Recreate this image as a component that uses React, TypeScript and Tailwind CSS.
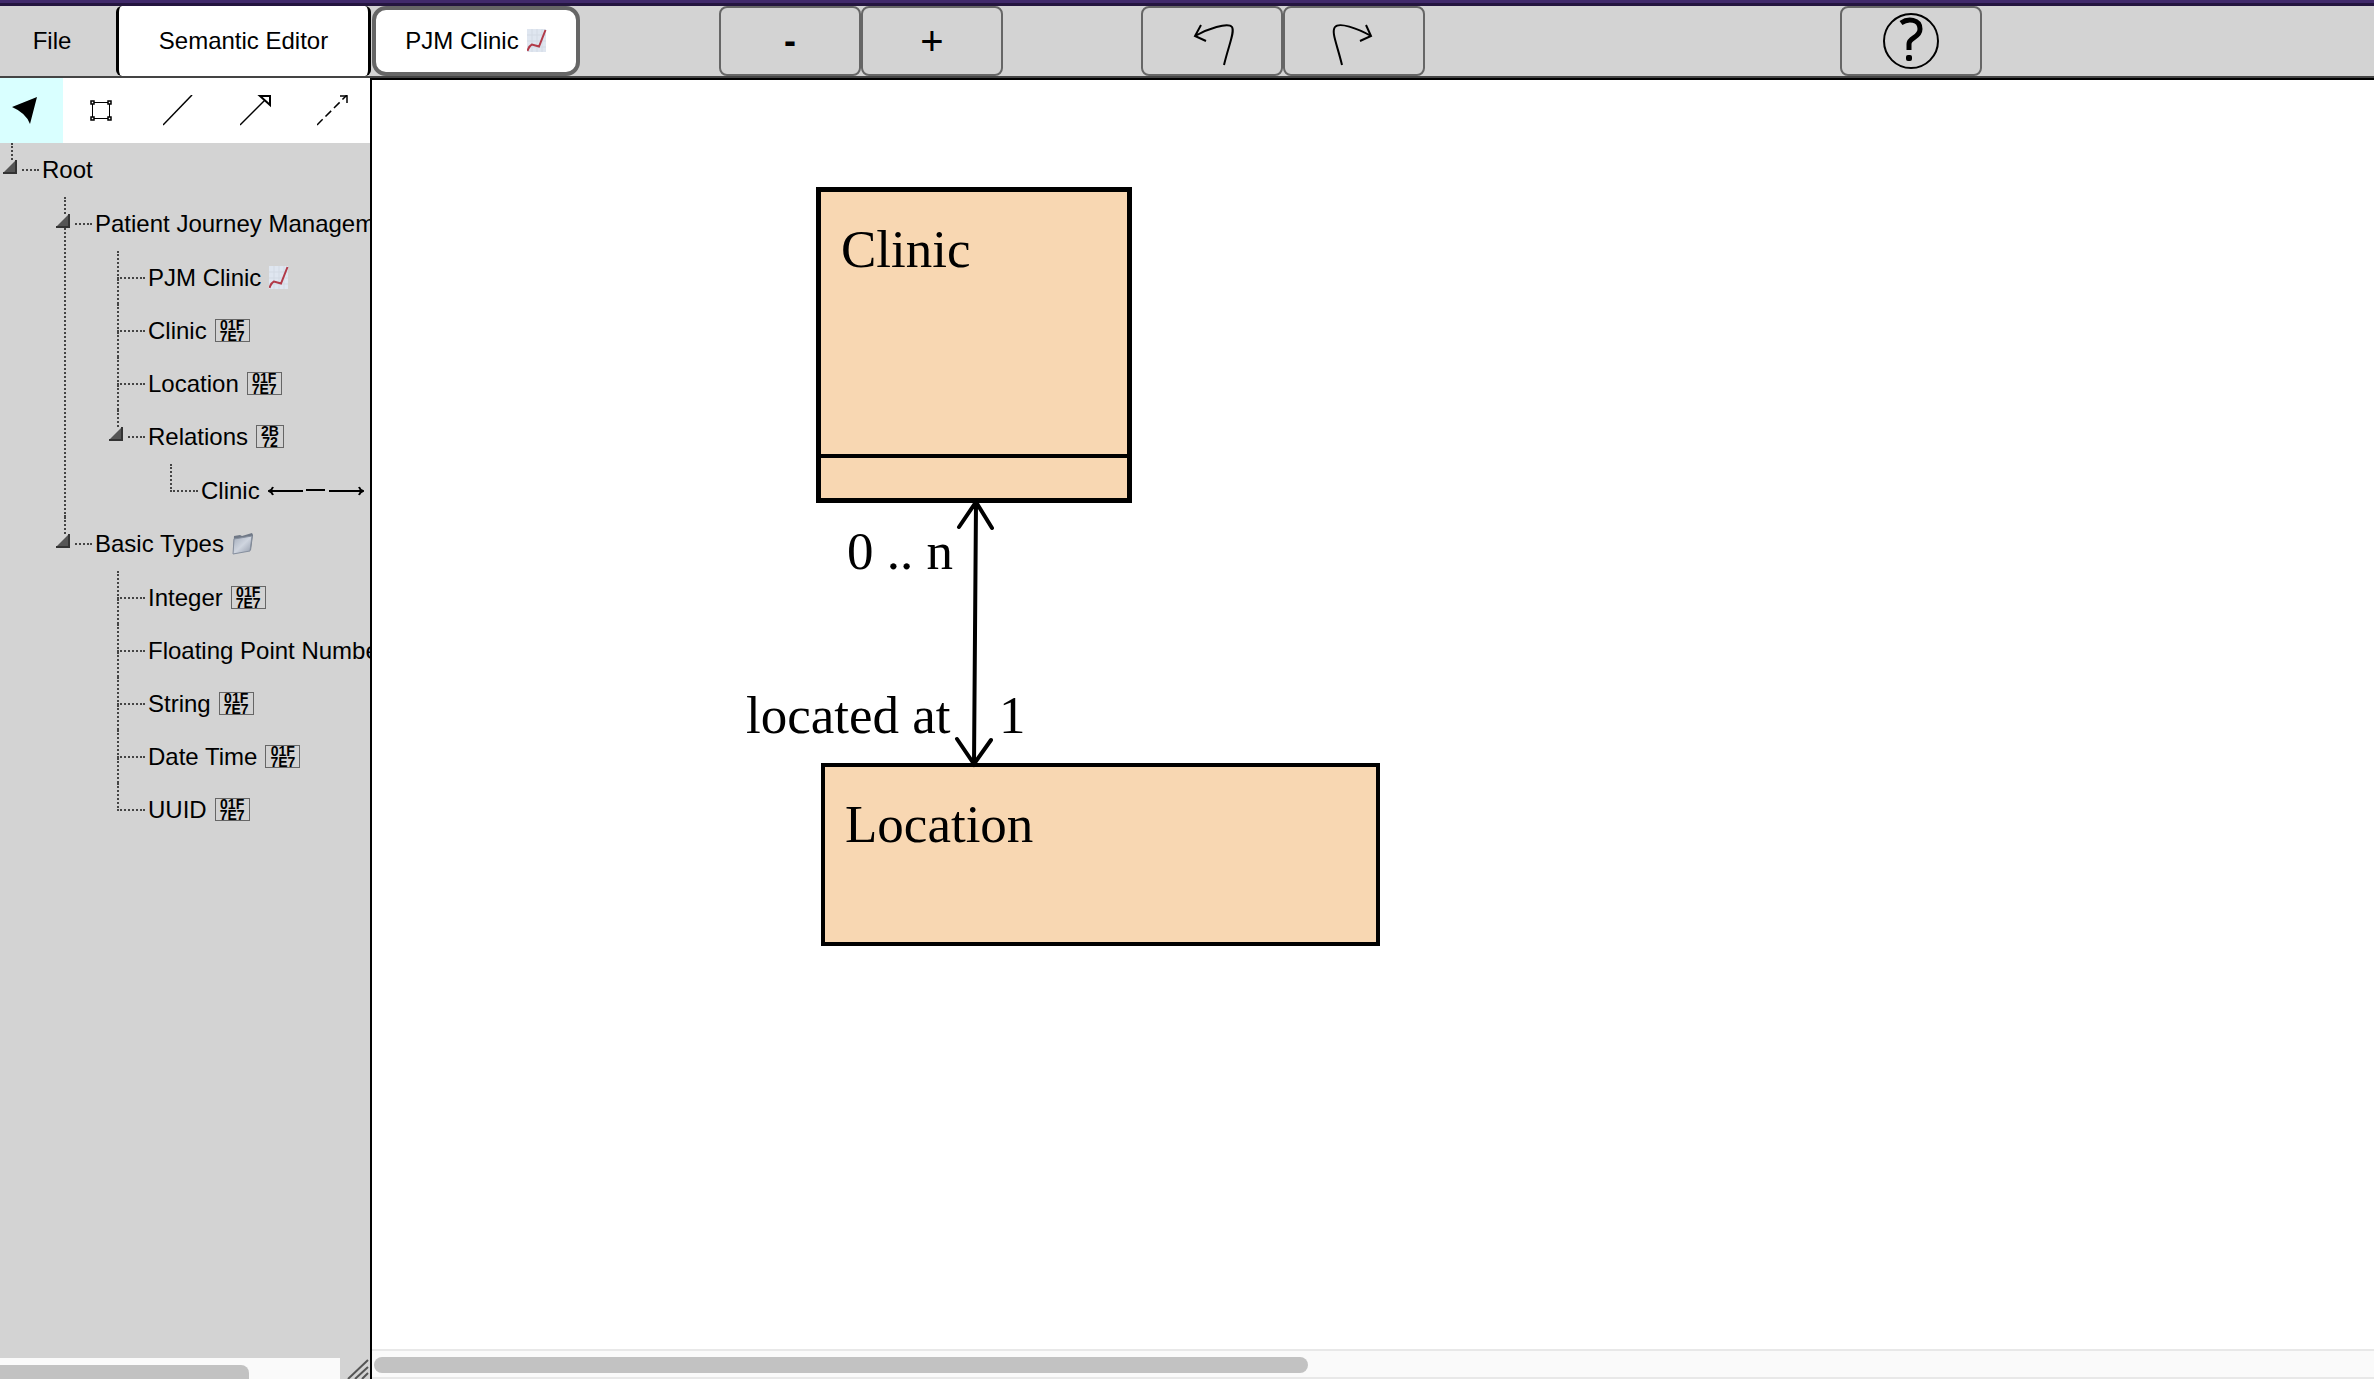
import { useState, type ReactNode } from "react";

function ChartIcon() {
  return (
    <svg width="20" height="24" viewBox="0 0 20 24" className="inline-block shrink-0" aria-hidden="true">
      <rect x="0" y="0" width="19" height="23" fill="#dfe6f0" />
      <path d="M5 0V23M10 0V23M15 0V23M0 6H19M0 12H19M0 18H19" stroke="#d3dae4" strokeWidth="1" />
      <path d="M0.500 22Q2 17 5 15.500L12 17.500L18.500 1" fill="none" stroke="#b23a48" strokeWidth="2" />
    </svg>
  );
}

function FolderIcon() {
  return (
    <svg width="22" height="24" viewBox="0 0 22 24" className="shrink-0" aria-hidden="true">
      <defs>
        <linearGradient id="folder" x1="0" y1="0" x2="1" y2="1">
          <stop offset="0" stopColor="#a3acbb" />
          <stop offset="0.5" stopColor="#cfd5df" />
          <stop offset="1" stopColor="#8f98a8" />
        </linearGradient>
      </defs>
      <path d="M2 4L8 3L10 4L20 1L21 3L19 18L1 22Z" fill="#6f7886" />
      <path d="M2 7L20 4L18 19L1 22Z" fill="url(#folder)" stroke="#868f9e" strokeWidth="1" />
    </svg>
  );
}

function HexBox({ top, bottom }: { top: string; bottom: string }) {
  return (
    <span className="flex h-[23px] shrink-0 flex-col items-center justify-center border border-[#666] px-1 text-[14px] leading-[11px] font-bold">
      <span>{top}</span>
      <span>{bottom}</span>
    </span>
  );
}

function RelationIcon() {
  return (
    <svg width="96" height="12" viewBox="0 0 96 12" className="shrink-0" fill="none" stroke="#000" strokeWidth="2" aria-hidden="true">
      <path d="M1 6H35M5 2Q4 5 1 6Q4 7 5 10" />
      <path d="M38 5H57" />
      <path d="M61 6H95M91 2Q92 5 95 6Q92 7 91 10" />
    </svg>
  );
}

type Node = { label: string; icon?: ReactNode; children?: Node[] };

const square = <HexBox top="01F" bottom="7E7" />;

const tree: Node = {
  label: "Root",
  children: [
    {
      label: "Patient Journey Management",
      children: [
        { label: "PJM Clinic", icon: <ChartIcon /> },
        { label: "Clinic", icon: square },
        { label: "Location", icon: square },
        {
          label: "Relations",
          icon: <HexBox top="2B" bottom="72" />,
          children: [{ label: "Clinic", icon: <RelationIcon /> }],
        },
      ],
    },
    {
      label: "Basic Types",
      icon: <FolderIcon />,
      children: [
        { label: "Integer", icon: square },
        { label: "Floating Point Number", icon: square },
        { label: "String", icon: square },
        { label: "Date Time", icon: square },
        { label: "UUID", icon: square },
      ],
    },
  ],
};

function TreeItem({ node, last }: { node: Node; last: boolean }) {
  const [open, setOpen] = useState(true);
  return (
    <li className="flex">
      <div className="relative flex w-[31px] shrink-0 flex-col">
        <div className="h-[28px] w-[28px] border-b-2 border-l-2 border-dotted border-[#444]" />
        {!last && <div className="flex-1 border-l-2 border-dotted border-[#444]" />}
        {node.children && (
          <button
            type="button"
            aria-label={`Toggle ${node.label}`}
            onClick={() => setOpen(!open)}
            className="absolute top-[17px] -left-2 bg-[#d3d3d3] pr-1"
          >
            <svg width="14" height="14" viewBox="0 0 14 14" className="block" aria-hidden="true">
              <path d="M13 0V13H0Z" fill="#555" />
              <path d="M13 0V13H0" fill="none" stroke="#333" strokeWidth="2" />
            </svg>
          </button>
        )}
      </div>
      <div>
        <div className="flex h-[53px] items-center gap-2 whitespace-nowrap">
          <span>{node.label}</span>
          {node.icon}
        </div>
        {node.children && open && (
          <ul className="pt-px pl-[22px]">
            {node.children.map((child, i) => (
              <TreeItem key={child.label} node={child} last={i === node.children!.length - 1} />
            ))}
          </ul>
        )}
      </div>
    </li>
  );
}

const tools = [
  {
    name: "Select",
    icon: <path d="M3 12L28 2L21 29Q17 18 3 12Z" fill="#000" stroke="none" />,
  },
  {
    name: "Class",
    icon: (
      <g strokeWidth="1">
        <path d="M8 7.500H22M8 23.500H22M6.500 9V22M23.500 9V22" />
        <path d="M5 6h3v3h-3zM22 6h3v3h-3zM5 22h3v3h-3zM22 22h3v3h-3z" strokeWidth="1.500" />
      </g>
    ),
  },
  { name: "Line", icon: <path d="M0 30L29 0" /> },
  {
    name: "Arrow",
    icon: (
      <g>
        <path d="M0 30L25 5" />
        <path d="M20 1H30V10Z" strokeWidth="2" />
      </g>
    ),
  },
  {
    name: "Dependency",
    icon: (
      <g>
        <path d="M0 30L30 0" strokeDasharray="8 4" />
        <path d="M23 1H30V8" />
      </g>
    ),
  },
];

function ToolbarButton({ label, children }: { label: string; children: ReactNode }) {
  return (
    <button
      type="button"
      aria-label={label}
      className="flex w-[142px] items-center justify-center rounded-[8px] border-2 border-[#666]"
    >
      {children}
    </button>
  );
}

function Toolbar() {
  return (
    <header className="flex h-[72px] shrink-0 border-b-2 border-[#444] bg-[#d3d3d3] text-[24px]">
      <button type="button" className="w-[116px] pr-3">
        File
      </button>
      <button type="button" className="w-[255px] rounded-[6px] border-x-[3px] border-black bg-white">
        Semantic Editor
      </button>
      <button
        type="button"
        className="ml-px flex w-[208px] items-center justify-center gap-2 rounded-[14px] border-4 border-[#666] bg-white"
      >
        PJM Clinic <ChartIcon />
      </button>
      <div className="ml-[139px] flex">
        <ToolbarButton label="Zoom out">
          <span className="text-[36px] font-bold">-</span>
        </ToolbarButton>
        <ToolbarButton label="Zoom in">
          <span className="text-[40px]">+</span>
        </ToolbarButton>
      </div>
      <div className="ml-[138px] flex">
        <ToolbarButton label="Undo">
          <svg width="46" height="50" viewBox="0 0 46 50" fill="none" stroke="#000" strokeWidth="2" aria-hidden="true">
            <path d="M35 49C40 28 46 16 43 11C39 6 18 13 6 20M12 9L6 20L17 25" />
          </svg>
        </ToolbarButton>
        <ToolbarButton label="Redo">
          <svg width="46" height="50" viewBox="0 0 46 50" fill="none" stroke="#000" strokeWidth="2" aria-hidden="true">
            <path d="M11 49C6 28 0 16 4 11C8 6 26 12 40 20M35 9L40 20L29 25" />
          </svg>
        </ToolbarButton>
      </div>
      <div className="ml-[415px] flex">
        <ToolbarButton label="Help">
          <svg width="56" height="56" viewBox="0 0 56 56" fill="none" stroke="#000" aria-hidden="true">
            <circle cx="28" cy="28" r="27" strokeWidth="2" />
            <path d="M18 10C25 5 37 6 37 16C37 25 26 24 26 31V37" strokeWidth="5" />
            <rect x="23" y="42" width="6" height="6" rx="2" fill="#000" stroke="none" />
          </svg>
        </ToolbarButton>
      </div>
    </header>
  );
}

function Sidebar() {
  const [active, setActive] = useState("Select");
  return (
    <aside className="flex w-[372px] shrink-0 flex-col overflow-hidden border-r-2 border-black bg-[#d3d3d3] text-[24px]">
      <div className="flex h-[65px] shrink-0 gap-[14px] bg-white">
        {tools.map((tool) => (
          <button
            key={tool.name}
            type="button"
            aria-label={tool.name}
            aria-pressed={active === tool.name}
            onClick={() => setActive(tool.name)}
            className="flex w-[63px] shrink-0 items-center pl-[9px] aria-pressed:bg-[#d9ffff]"
          >
            <svg width="31" height="31" viewBox="0 0 31 31" fill="none" stroke="#000" strokeWidth="1.500" aria-hidden="true">
              {tool.icon}
            </svg>
          </button>
        ))}
      </div>
      <ul className="flex-1 overflow-hidden pl-[11px]">
        <TreeItem node={tree} last />
      </ul>
      <div className="flex h-[21px] shrink-0 overflow-hidden">
        <div className="flex-1 bg-[#fafafa] pt-[7px]">
          <div className="h-[16px] w-[249px] rounded-tr-[8px] bg-[#c2c2c2]" />
        </div>
        <svg width="30" height="21" viewBox="0 0 30 21" stroke="#555" strokeWidth="2" aria-hidden="true">
          <path d="M8 21L28 2M15 21L28 9M22 21L28 15" />
        </svg>
      </div>
    </aside>
  );
}

function Canvas() {
  return (
    <main className="flex min-w-0 flex-1 flex-col border-t-2 border-black bg-white">
      <div className="relative flex-1 overflow-hidden font-['Liberation_Serif',serif] text-[53px] leading-[60px]">
        <div className="absolute top-[107px] left-[444px] flex h-[316px] w-[316px] flex-col border-[5px] border-black bg-[#f8d7b2]">
          <div className="flex-1 border-b-4 border-black pt-[27px] pl-5">Clinic</div>
          <div className="h-[40px]" />
        </div>
        <div className="absolute top-[683px] left-[449px] h-[183px] w-[559px] border-4 border-black bg-[#f8d7b2] pt-[27px] pl-5">
          Location
        </div>
        <svg
          className="absolute top-[420px] left-[580px]"
          width="48"
          height="268"
          viewBox="0 0 48 268"
          fill="none"
          stroke="#000"
          strokeWidth="4"
          strokeLinecap="round"
          aria-hidden="true"
        >
          <path d="M24 3L22 264M7 27L24 2L40 28M5 239L22 264L39 240" />
        </svg>
        <span className="absolute top-[441px] left-[475px] whitespace-nowrap">0 .. n</span>
        <span className="absolute top-[605px] left-[374px] whitespace-nowrap">located at</span>
        <span className="absolute top-[605px] left-[627px]">1</span>
      </div>
      <div className="flex h-[30px] shrink-0 items-center border-y-2 border-[#e8e8e8] bg-[#fafafa] pt-px pl-[2px]">
        <div className="h-[16px] w-[934px] rounded-full bg-[#c2c2c2]" />
      </div>
    </main>
  );
}

export default function App() {
  return (
    <div className="flex h-screen flex-col overflow-hidden bg-white font-['Liberation_Sans',Arial,sans-serif] text-black">
      <div className="h-[6px] shrink-0 border-b-[3px] border-[#24153f] bg-[#412a6b]" />
      <Toolbar />
      <div className="flex min-h-0 flex-1">
        <Sidebar />
        <Canvas />
      </div>
    </div>
  );
}
